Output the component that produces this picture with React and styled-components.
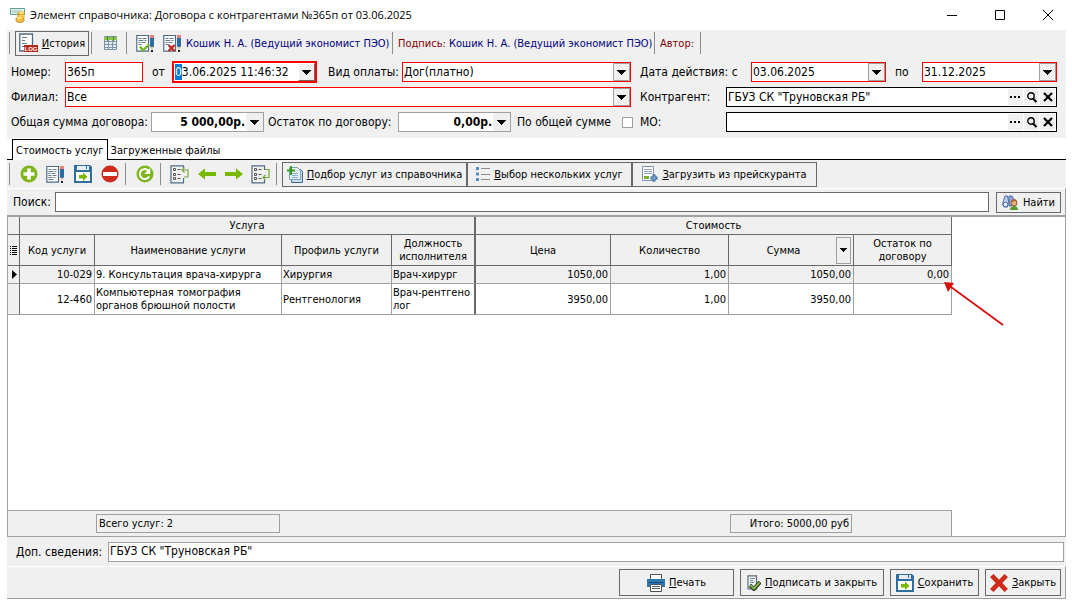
import React, { useEffect, useRef } from "react";
import styled, { createGlobalStyle, css } from "styled-components";

const FACE = "#f0f0f0";
const DARK = "#696969";
const MID = "#a0a0a0";
const UI = `"DejaVu Sans Condensed", "Noto Sans", sans-serif`;

const GlobalStyle = createGlobalStyle`
  *, *::before, *::after { box-sizing: border-box; }
  body { margin: 0; background: #fff; color: #000; font: 11px/13px ${UI}; }
  button, input, select { font: inherit; color: inherit; margin: 0; border-radius: 0; }
  svg { display: block; flex: none; }
  ::selection { background: #0078d7; color: #fff; }
`;

const Window = styled.main`
  display: flex;
  flex-direction: column;
  min-height: 100vh;
  padding: 0 6px 7px 7px;
`;

const TitleBar = styled.header`
  display: flex;
  align-items: center;
  height: 30px;
  padding-left: 3px;
  gap: 4px;
`;

const Title = styled.h1`
  flex: 1;
  margin: 0;
  font: 11px/16px "Open Sans", "Noto Sans", sans-serif;
  white-space: nowrap;
`;

const CaptionButtons = styled.div`
  display: flex;
  gap: 12px;
`;

const CaptionButton = styled.button`
  display: flex;
  align-items: center;
  justify-content: center;
  width: 36px;
  height: 30px;
  padding: 0;
  border: 0;
  background: none;
`;

const Toolbar = styled.div`
  display: flex;
  align-items: center;
  height: ${(p) => p.$height}px;
  background: ${FACE};
`;

const Separator = styled.span`
  flex: none;
  width: 1px;
  height: 22px;
  margin: 0 5px 0 2px;
  background: #8c8c8c;
`;

const ToolButton = styled.button`
  display: flex;
  align-items: center;
  justify-content: center;
  flex: none;
  width: 27px;
  height: 24px;
  padding: 0;
  border: 0;
  background: none;
`;

const PushButton = styled.button`
  display: flex;
  align-items: center;
  justify-content: center;
  gap: 4px;
  flex: none;
  width: ${(p) => p.$width}px;
  height: ${(p) => p.$height || 25}px;
  padding: 0;
  border: 1px solid ${DARK};
  background: ${FACE};
  white-space: nowrap;
`;

const Signer = styled.span`
  flex: none;
  width: ${(p) => p.$width}px;
  color: #800000;
  white-space: nowrap;
  b { font-weight: 400; color: #000080; }
`;

const Form = styled.form`
  display: flex;
  flex-direction: column;
  gap: 5px;
  padding: 6px 9px 6px 4px;
  background: ${FACE};
`;

const FormRow = styled.div`
  display: flex;
  gap: 9px;
  height: 20px;
`;

const LeftFields = styled.div`
  display: flex;
  align-items: center;
  flex: 1;
  min-width: 0;
`;

const RightFields = styled(LeftFields)`
  flex: none;
  width: 417px;
`;

const Label = styled.label`
  flex: none;
  width: ${(p) => p.$width}px;
  padding-left: ${(p) => p.$indent || 0}px;
  font-size: 12px;
  line-height: 16px;
  white-space: nowrap;
`;

const Box = styled.span`
  display: flex;
  align-items: stretch;
  flex: ${(p) => (p.$width ? "none" : "1")};
  width: ${(p) => (p.$width ? p.$width + "px" : "auto")};
  min-width: 0;
  height: ${(p) => (p.$active ? 22 : 20)}px;
  border: ${(p) => (p.$active ? 2 : 1)}px solid ${(p) => p.$line || "#f00"};
  background: #fff;
`;

const Entry = styled.input`
  flex: 1;
  width: 0;
  min-width: 0;
  padding: 0 1px 1px;
  border: 0;
  outline: 0;
  background: transparent;
  font-size: 12px;
  line-height: 16px;
  ${(p) =>
    p.$money &&
    css`
      font-weight: 700;
      text-align: right;
    `}
`;

const Choice = styled.select`
  flex: 1;
  min-width: 0;
  padding: 0 1px 1px;
  border: 0;
  outline: 0;
  appearance: none;
  background: transparent;
  font-size: 12px;
  line-height: 16px;
`;

const Drop = styled.button`
  display: flex;
  align-items: center;
  justify-content: center;
  flex: none;
  width: 17px;
  padding: 0;
  border: ${(p) => (p.$flat ? "0" : `1px solid ${MID}`)};
  background: ${FACE};
  ${(p) =>
    p.$raised &&
    css`
      border-color: #fff ${DARK} ${DARK} #fff;
    `}
`;

const LookupButton = styled(Drop)`
  width: 15px;
  height: 16px;
  margin: 1px 1px 0 0;
  border: 0;
`;

const Check = styled.input`
  appearance: none;
  flex: none;
  width: 11px;
  height: 11px;
  border: 1px solid ${MID};
  background: #fff;
`;

const Tabs = styled.div`
  display: flex;
  align-items: flex-end;
  height: 22px;
  padding-left: 5px;
  border-bottom: 1px solid #000;
`;

const Tab = styled.button`
  height: ${(p) => (p.$active ? 21 : 18)}px;
  margin-bottom: ${(p) => (p.$active ? -1 : 0)}px;
  padding: 0 3px;
  border: ${(p) => (p.$active ? "1px solid #000" : "0")};
  border-bottom: 0;
  background: #fff;
  white-space: nowrap;
`;

const SearchBar = styled.div`
  display: flex;
  align-items: center;
  height: 27px;
  padding: 0 4px 0 6px;
  border-top: 1px solid #fff;
  border-right: 1px solid ${MID};
  background: ${FACE};
`;

const SearchBox = styled(Box)`
  margin-right: 7px;
`;

const GridPanel = styled.section`
  display: flex;
  flex-direction: column;
  flex: 1;
  border: 1px solid ${MID};
  border-top-width: 2px;
  background: #fff;
`;

const GridBody = styled.div`
  flex: 1;
`;

const Table = styled.table`
  width: 944px;
  table-layout: fixed;
  border-collapse: separate;
  border-spacing: 0;
`;

const Head = styled.th`
  height: ${(p) => p.$height}px;
  padding: 0 2px;
  border: solid ${DARK};
  border-width: 0 ${(p) => (p.$split ? 2 : 1)}px 1px 0;
  background: ${FACE};
  font-weight: 400;
  svg { margin: 0 auto; }
`;

const HeadInner = styled.span`
  display: flex;
  align-items: center;
  justify-content: flex-end;
  span { flex: 1; }
`;

const FilterButton = styled(Drop)`
  width: 15px;
  height: 27px;
`;

const Cell = styled.td`
  height: ${(p) => p.$height}px;
  padding: 0 ${(p) => (p.$num ? 2 : 0)}px 0 1px;
  border: solid ${MID};
  border-width: 0 ${(p) => (p.$split ? 2 : 1)}px 1px 0;
  border-right-color: ${(p) => (p.$split || p.$marker ? DARK : MID)};
  background: ${(p) => (p.$shade ? FACE : "#fff")};
  text-align: ${(p) => (p.$num ? "right" : "left")};
  position: relative;
`;

const Pointer = styled.svg`
  position: absolute;
  z-index: 1;
  left: 90px;
  top: 16px;
  pointer-events: none;
`;

const GridFooter = styled.div`
  display: flex;
  justify-content: space-between;
  width: 944px;
  height: 26px;
  padding: 3px 99px 3px 88px;
  border: solid ${MID};
  border-width: 1px 1px 0 0;
  background: ${FACE};
`;

const Total = styled.output`
  width: ${(p) => p.$width}px;
  padding: 2px 2px;
  border: 1px solid ${MID};
  line-height: 14px;
  text-align: ${(p) => p.$align || "left"};
  white-space: nowrap;
`;

const NoteBar = styled.div`
  display: flex;
  align-items: center;
  height: 29px;
  padding: 0 2px 0 9px;
  background: ${FACE};
`;

const ActionBar = styled.footer`
  display: flex;
  align-items: center;
  justify-content: flex-end;
  gap: 6px;
  height: 33px;
  padding-right: 4px;
  border-top: 1px solid #fff;
  border-right: 1px solid ${MID};
  border-bottom: 1px solid ${MID};
  background: ${FACE};
`;

/* ---------- icons ---------- */
const Arrow = ({ small }) => (
  <svg width="9" height="5" viewBox="0 0 9 5" shapeRendering="crispEdges">
    <path d={small ? "M1 0h7L4.500 4z" : "M0 0h9L4.500 5z"} fill="#000" />
  </svg>
);

const AppIcon = () => (
  <svg width="16" height="16" viewBox="0 0 16 16">
    <path d="M.500 1.500h14v6H.500z" fill="#dff0ea" stroke="#5f9e90" />
    <path d="M2 3h9v3H2z" fill="#b9dccf" />
    <path d="M6 11.500v2c0 1 1.500 2 4 2s4-1 4-2V6c0-2-6-2-6 0v4c-1 0-2 .600-2 1.500z" fill="#e9a92c" stroke="#b9761a" strokeWidth=".7" />
    <ellipse cx="11.500" cy="5.600" rx="3" ry="1.400" fill="#ffe27a" />
    <ellipse cx="9.300" cy="11" rx="3" ry="1.400" fill="#ffe27a" />
    <path d="M8.500 8c1.500 1 4 1 5.500 0M9 9.800c2 .700 4 .400 5-.200M6.500 13.200c1.500 1 5 1 7-.400" fill="none" stroke="#ffd75e" />
  </svg>
);

const LogText = styled.text`
  font: 700 6px "Liberation Sans", sans-serif;
  fill: #fff;
`;

const LogIcon = () => (
  <svg width="19" height="20" viewBox="0 0 19 20">
    <path d="M.800 1h12.700v17H.800z" fill="#fff" stroke="#4d6b85" strokeWidth="1.300" />
    <path d="M3 4.500h5M3 7.500h3M3 10.500h5M3 13.500h2" stroke="#5f7688" />
    <path d="M5 12h14v7H5z" fill="#b5281a" />
    <LogText x="12" y="18" textAnchor="middle">LOG</LogText>
  </svg>
);

const CalcIcon = () => (
  <svg width="13" height="14" viewBox="0 0 13 14">
    <path d="M.500.500h12v13H.500z" fill="#e6eef3" stroke="#7992a3" />
    <path d="M1 5.500h11M1 8.500h11M1 11.500h11M4.500 4v10M8.500 4v10" stroke="#7d98a9" />
    <path d="M0 1h13v3H0z" fill="#8cc152" />
    <path d="M3 0h1v5H3zM9 0h1v5H9z" fill="#4c8b20" />
  </svg>
);

const Pencil = () => (
  <>
    <path d="M14 3h4v9l-2 3-2-3z" fill="#2b6ca3" />
    <path d="M14 1h4v3h-4z" fill="#e8837c" />
    <path d="M14 13h4l-2 3z" fill="#e7c9a0" />
    <path d="M15 16h2v2h-2z" fill="#222" />
  </>
);

const SheetIcon = ({ mark }) => (
  <svg width="19" height="19" viewBox="0 0 19 19">
    <path d="M.800 1.500h11.700v15.700H.800z" fill="#fff" stroke="#4d6b85" strokeWidth="1.200" />
    <path d="M2.500 4.500h3M6.500 4.500h4M2.500 6.500h5M8.500 6.500h2M2.500 8.500h2M5.500 8.500h4M2.500 10.500h3" stroke="#667b8b" />
    {!mark && <path d="M6.500 10.500h4M2.500 12.500h4M7.500 12.500h2M2.500 14.500h5" stroke="#667b8b" />}
    {mark === "ok" && <path d="M4 12.500l3 4 6-6" fill="none" stroke="#72b626" strokeWidth="2.400" />}
    {mark === "no" && <path d="M5.500 11l6 6M11.500 11l-6 6" stroke="#c3281d" strokeWidth="2.400" />}
    <Pencil />
  </svg>
);

const PlusIcon = () => (
  <svg width="18" height="18" viewBox="0 0 18 18">
    <circle cx="9" cy="9" r="8.500" fill="#7eb51c" />
    <path d="M9 3.500v11M3.500 9h11" stroke="#fff" strokeWidth="3.600" />
  </svg>
);
const StopIcon = () => (
  <svg width="18" height="18" viewBox="0 0 18 18">
    <circle cx="9" cy="9" r="8.500" fill="#cd2b1c" />
    <path d="M2 9h14" stroke="#fff" strokeWidth="4" />
  </svg>
);
const RefreshIcon = () => (
  <svg width="18" height="18" viewBox="0 0 18 18">
    <circle cx="9" cy="9" r="8.500" fill="#7eb51c" />
    <path d="M13.200 11.400a5 5 0 1 1-1-6" fill="none" stroke="#fff" strokeWidth="2" />
    <path d="M14.200 3v6H8.200z" fill="#fff" />
  </svg>
);
const SaveIcon = () => (
  <svg width="18" height="18" viewBox="0 0 18 18">
    <path d="M0 0h16l2 2v16H0z" fill="#2f6f9f" />
    <path d="M3 1h12v4H3z" fill="#e6edf2" />
    <path d="M12 1h1v3h-1z" fill="#2f6f9f" />
    <path d="M2 7h14v9H2z" fill="#fff" />
    <path d="M5 10h4V7.500l4.500 4.200L9 16v-2.500H5z" fill="#78b800" />
  </svg>
);
const ListIcon = ({ down }) => (
  <svg width="19" height="19" viewBox="0 0 19 19" fill="none">
    <path d={down ? "M13.500 5V.800H1v17h12.500V15" : "M13.500 3V.800H1v17h12.500V13"} stroke="#4d6b85" strokeWidth="1.200" />
    <path d="M3.500 3.500h2v2h-2zM3.500 8.500h2v2h-2zM3.500 12.500h2v2h-2z" stroke="#555" />
    <path d="M7.500 4.500h3M7.500 9.500h3M7.500 13.500h3" stroke="#555" />
    <g stroke="#78a63c" strokeWidth="1.200">
      {down ? (
        <path d="M14 4.500h4v8h-6M14.500 10L12 12.500l2.500 2.500" />
      ) : (
        <path d="M14 12h4V5h-6M14.500 2.500L12 5l2.500 2.500" />
      )}
    </g>
  </svg>
);
const ArrowIcon = ({ right }) => (
  <svg width="18" height="12" viewBox="0 0 18 12">
    <path d={right ? "M0 4h11V.500L18 6l-7 5.500V8H0z" : "M18 4H7V.500L0 6l7 5.500V8h11z"} fill="#78b800" />
  </svg>
);
const CopyAddIcon = () => (
  <svg width="16" height="17" viewBox="0 0 16 17">
    <path d="M5.500 3.500h8l2 2v11h-11z" fill="#c9dcea" stroke="#3f6b8a" />
    <path d="M2.500 1.500h8l3 3v9h-11z" fill="#e6f1f7" stroke="#7ba0b8" />
    <path d="M5 7.500h6M5 9.500h6M5 11.500h6" stroke="#8eb2c9" />
    <path d="M4 0v9M0 4.500h8" stroke="#3b9a1e" strokeWidth="2" />
  </svg>
);
const BulletsIcon = () => (
  <svg width="14" height="14" viewBox="0 0 14 14">
    <path d="M0 0h3v3H0zM0 5.500h3v3H0zM0 11h3v3H0z" fill="#5b8cc8" />
    <path d="M5 1.500h9M5 7.500h9M5 12.500h9" stroke="#8c8c8c" />
  </svg>
);
const PriceIcon = () => (
  <svg width="16" height="16" viewBox="0 0 16 16">
    <path d="M.500.500h11v14H.500z" fill="#fff" stroke="#7f93bb" />
    <path d="M2 3.500h8M2 5.500h8M2 7.500h8" stroke="#8fa0cc" />
    <path d="M2 10h5v3H2z" fill="#74b52a" />
    <path d="M12 8.500v7M8.500 12h7" stroke="#2f5e8f" strokeWidth="3" />
    <path d="M12 9.500v5M9.500 12h5" stroke="#8fc0e4" />
  </svg>
);
const FindIcon = () => (
  <svg width="17" height="15" viewBox="0 0 17 15">
    <path d="M3 1h2.500l1 5-1 6H2L.500 9z" fill="#bfd0ec" stroke="#4a6aa8" />
    <path d="M7 1h3l2 4-3 6H7z" fill="#8ea9d8" stroke="#4a6aa8" />
    <circle cx="3.500" cy="9.500" r="2.300" fill="#e8f0fb" stroke="#4a6aa8" />
    <path d="M8 15c0-3 2-4 4-4s4 1 4 4z" fill="#5a9a2c" />
    <circle cx="12" cy="8" r="3" fill="#e9b27d" stroke="#8d5523" />
    <path d="M9 7c0-4 6-4 6 0l-2-1z" fill="#a5602a" />
  </svg>
);
const PrintIcon = () => (
  <svg width="18" height="18" viewBox="0 0 18 18">
    <path d="M3.500.500h11V6h-11z" fill="#fff" stroke="#555" />
    <path d="M0 5h18v8H0z" fill="#2f77ad" />
    <path d="M2 8.500h14" stroke="#174e7c" />
    <path d="M3.500 10.500h11v7h-11z" fill="#fff" stroke="#555" />
    <path d="M5 12.500h8M5 14.500h8" stroke="#666" />
  </svg>
);
const SignIcon = () => (
  <svg width="14" height="16" viewBox="0 0 14 16">
    <path d="M1 .800h8.500V14H1z" fill="#eef2f4" stroke="#5c6b75" strokeWidth="1.200" />
    <path d="M3 3.500h5M3 5.500h3M3 7.500h4M3 9.500h2" stroke="#7b8b96" />
    <path d="M3 10.500l4 3.500 6-7" fill="none" stroke="#2e3e20" strokeWidth="4" />
    <path d="M3.500 10.500L7 13.500l5.500-6" fill="none" stroke="#84b04a" strokeWidth="2" />
  </svg>
);
const CloseIcon = () => (
  <svg width="18" height="18" viewBox="0 0 18 18">
    <path d="M3.500 0L9 5.800 14.500 0 18 3l-5.700 6L18 15l-3.500 3L9 12.200 3.500 18 0 15l5.700-6L0 3z" fill="#cd2b1c" />
  </svg>
);

const Lookup = ({ id, value }) => (
  <Box $line="#000">
    <Entry id={id} defaultValue={value} />
    <LookupButton type="button" aria-label="Выбрать">
      <svg width="11" height="2" viewBox="0 0 11 2"><path d="M0 0h2v2H0zM4 0h2v2H4zM8 0h2v2H8z" /></svg>
    </LookupButton>
    <LookupButton type="button" aria-label="Просмотр">
      <svg width="10" height="11" viewBox="0 0 10 11" fill="none" stroke="#000">
        <circle cx="4" cy="4" r="3.200" strokeWidth="1.400" />
        <path d="M6 6.500l3.500 3.500" strokeWidth="2.200" />
      </svg>
    </LookupButton>
    <LookupButton type="button" aria-label="Очистить">
      <svg width="10" height="10" viewBox="0 0 10 10"><path d="M1 1l8 8M9 1L1 9" stroke="#000" strokeWidth="2.200" /></svg>
    </LookupButton>
  </Box>
);

const DropField = ({ id, value, width, line, money, active, inputRef }) => (
  <Box $width={width} $line={line} $active={active}>
    <Entry id={id} defaultValue={value} $money={money} ref={inputRef} />
    <Drop type="button" aria-label="Раскрыть" $flat={money} $raised={active}><Arrow /></Drop>
  </Box>
);

const SelectField = ({ id, value }) => (
  <Box>
    <Choice id={id}><option>{value}</option></Choice>
    <Drop as="span"><Arrow /></Drop>
  </Box>
);

const services = [
  { code: "10-029", name: "9. Консультация врача-хирурга", profile: "Хирургия", post: "Врач-хирург", price: "1050,00", qty: "1,00", sum: "1050,00", rest: "0,00" },
  { code: "12-460", name: <>Компьютерная томография<br />органов брюшной полости</>, profile: "Рентгенология", post: <>Врач-рентгено<br />лог</>, price: "3950,00", qty: "1,00", sum: "3950,00", rest: "" },
];

export default function App() {
  const dateRef = useRef(null);
  useEffect(() => {
    dateRef.current.focus();
    dateRef.current.setSelectionRange(0, 1);
  }, []);

  return (
    <Window>
      <GlobalStyle />
      <TitleBar>
        <AppIcon />
        <Title>Элемент справочника: Договора с контрагентами №365п от 03.06.2025</Title>
        <CaptionButtons>
          <CaptionButton aria-label="Свернуть"><svg width="10" height="10"><path d="M0 5.500h10" stroke="#000" /></svg></CaptionButton>
          <CaptionButton aria-label="Развернуть"><svg width="10" height="10"><path d="M.500.500h9v9h-9z" fill="none" stroke="#000" /></svg></CaptionButton>
          <CaptionButton aria-label="Закрыть окно"><svg width="10" height="10"><path d="M0 0l10 10M10 0L0 10" stroke="#000" /></svg></CaptionButton>
        </CaptionButtons>
      </TitleBar>

      <Toolbar $height={26}>
        <Separator />
        <PushButton $width={74} $height={25}><LogIcon /><span><u>И</u>стория</span></PushButton>
        <Separator />
        <ToolButton aria-label="Таблица"><CalcIcon /></ToolButton>
        <Separator />
        <ToolButton aria-label="Подписать"><SheetIcon mark="ok" /></ToolButton>
        <ToolButton aria-label="Снять подпись"><SheetIcon mark="no" /></ToolButton>
        <Signer $width={204}><b>Кошик Н. А. (Ведущий экономист ПЭО)</b></Signer>
        <Separator />
        <Signer $width={254}>Подпись: <b>Кошик Н. А. (Ведущий экономист ПЭО)</b></Signer>
        <Separator />
        <Signer $width={38}>Автор:</Signer>
        <Separator />
      </Toolbar>

      <Form>
        <FormRow>
          <LeftFields>
            <Label $width={54} htmlFor="num">Номер:</Label>
            <Box $width={78}><Entry id="num" defaultValue="365п" /></Box>
            <Label $width={29} $indent={9} htmlFor="date">от</Label>
            <DropField id="date" value="03.06.2025 11:46:32" width={145} active inputRef={dateRef} />
            <Label $width={85} $indent={11} htmlFor="pay">Вид оплаты:</Label>
            <SelectField id="pay" value="Дог(платно)" />
          </LeftFields>
          <RightFields>
            <Label $width={111} htmlFor="from">Дата действия: с</Label>
            <DropField id="from" value="03.06.2025" width={135} />
            <Label $width={36} $indent={9} htmlFor="to">по</Label>
            <DropField id="to" value="31.12.2025" width={135} />
          </RightFields>
        </FormRow>
        <FormRow>
          <LeftFields>
            <Label $width={54} htmlFor="branch">Филиал:</Label>
            <SelectField id="branch" value="Все" />
          </LeftFields>
          <RightFields>
            <Label $width={86} htmlFor="agent">Контрагент:</Label>
            <Lookup id="agent" value={'ГБУЗ СК "Труновская РБ"'} />
          </RightFields>
        </FormRow>
        <FormRow>
          <LeftFields>
            <Label $width={140} htmlFor="sum">Общая сумма договора:</Label>
            <DropField id="sum" value="5 000,00р." width={113} line={MID} money />
            <Label $width={134} $indent={4} htmlFor="rest">Остаток по договору:</Label>
            <DropField id="rest" value="0,00р." width={113} line={MID} money />
            <Label $width={111} $indent={6} htmlFor="common">По общей сумме</Label>
            <Check type="checkbox" id="common" />
          </LeftFields>
          <RightFields>
            <Label $width={86} htmlFor="mo">МО:</Label>
            <Lookup id="mo" value="" />
          </RightFields>
        </FormRow>
      </Form>

      <Tabs>
        <Tab $active>Стоимость услуг</Tab>
        <Tab>Загруженные файлы</Tab>
      </Tabs>

      <Toolbar $height={28}>
        <Separator />
        <ToolButton aria-label="Добавить"><PlusIcon /></ToolButton>
        <ToolButton aria-label="Изменить"><SheetIcon /></ToolButton>
        <ToolButton aria-label="Записать"><SaveIcon /></ToolButton>
        <ToolButton aria-label="Удалить"><StopIcon /></ToolButton>
        <Separator />
        <ToolButton aria-label="Обновить"><RefreshIcon /></ToolButton>
        <Separator />
        <ToolButton aria-label="В начало"><ListIcon /></ToolButton>
        <ToolButton aria-label="Назад"><ArrowIcon /></ToolButton>
        <ToolButton aria-label="Вперёд"><ArrowIcon right /></ToolButton>
        <ToolButton aria-label="В конец"><ListIcon down /></ToolButton>
        <Separator />
        <PushButton $width={185}><CopyAddIcon /><span><u>П</u>одбор услуг из справочника</span></PushButton>
        <PushButton $width={165}><BulletsIcon /><span><u>В</u>ыбор нескольких услуг</span></PushButton>
        <PushButton $width={185}><PriceIcon /><span><u>З</u>агрузить из прейскуранта</span></PushButton>
      </Toolbar>

      <SearchBar>
        <Label $width={42} htmlFor="search">Поиск:</Label>
        <SearchBox $line={DARK}><Entry id="search" /></SearchBox>
        <PushButton $width={65} $height={21}><FindIcon />Найти</PushButton>
      </SearchBar>

      <GridPanel>
        <GridBody>
          <Table>
            <colgroup>
              {[12, 75, 187, 110, 84, 135, 118, 125, 98].map((w, i) => <col key={i} width={w} />)}
            </colgroup>
            <thead>
              <tr>
                <Head $height={18} />
                <Head colSpan={4} $split>Услуга</Head>
                <Head colSpan={4}>Стоимость</Head>
              </tr>
              <tr>
                <Head $height={31}>
                  <svg width="7" height="9" viewBox="0 0 7 9"><path d="M0 .500h1M2 .500h5M0 2.500h1M2 2.500h5M0 4.500h1M2 4.500h5M0 6.500h1M2 6.500h5M0 8.500h1M2 8.500h5" stroke="#000" /></svg>
                </Head>
                <Head>Код услуги</Head>
                <Head>Наименование услуги</Head>
                <Head>Профиль услуги</Head>
                <Head $split>Должность исполнителя</Head>
                <Head>Цена</Head>
                <Head>Количество</Head>
                <Head><HeadInner><span>Сумма</span><FilterButton aria-label="Фильтр"><Arrow small /></FilterButton></HeadInner></Head>
                <Head>Остаток по договору</Head>
              </tr>
            </thead>
            <tbody>
              {services.map((s, i) => (
                <tr key={s.code}>
                  <Cell $height={i ? 31 : 18} $shade $marker>
                    {!i && <svg width="8" height="9" viewBox="0 0 8 9"><path d="M3 0l5 4.500L3 9z" /></svg>}
                  </Cell>
                  <Cell $num $shade={!i}>{s.code}</Cell>
                  <Cell>{s.name}</Cell>
                  <Cell $shade={!i}>{s.profile}</Cell>
                  <Cell $shade={!i} $split>{s.post}</Cell>
                  <Cell $num $shade={!i}>{s.price}</Cell>
                  <Cell $num $shade={!i}>{s.qty}</Cell>
                  <Cell $num $shade={!i}>{s.sum}</Cell>
                  <Cell $num $shade={!i}>
                    {s.rest}
                    {!i && (
                      <Pointer width="60" height="45" viewBox="0 0 60 45">
                        <path d="M7 5l52 38" stroke="#d90f0f" strokeWidth="1.800" />
                        <path d="M0 0l10 1-6 9z" fill="#d90f0f" />
                      </Pointer>
                    )}
                  </Cell>
                </tr>
              ))}
            </tbody>
          </Table>
        </GridBody>
        <GridFooter>
          <Total $width={184}>Всего услуг: 2</Total>
          <Total $width={122} $align="right">Итого: 5000,00 руб</Total>
        </GridFooter>
      </GridPanel>

      <NoteBar>
        <Label $width={92} htmlFor="note">Доп. сведения:</Label>
        <Box $line={MID}><Entry id="note" defaultValue={'ГБУЗ СК "Труновская РБ"'} /></Box>
      </NoteBar>

      <ActionBar>
        <PushButton $width={115} $height={27}><PrintIcon /><span><u>П</u>ечать</span></PushButton>
        <PushButton $width={144} $height={27}><SignIcon /><span><u>П</u>одписать и закрыть</span></PushButton>
        <PushButton $width={89} $height={27}><SaveIcon /><span><u>С</u>охранить</span></PushButton>
        <PushButton $width={76} $height={27}><CloseIcon /><span><u>З</u>акрыть</span></PushButton>
      </ActionBar>
    </Window>
  );
}
